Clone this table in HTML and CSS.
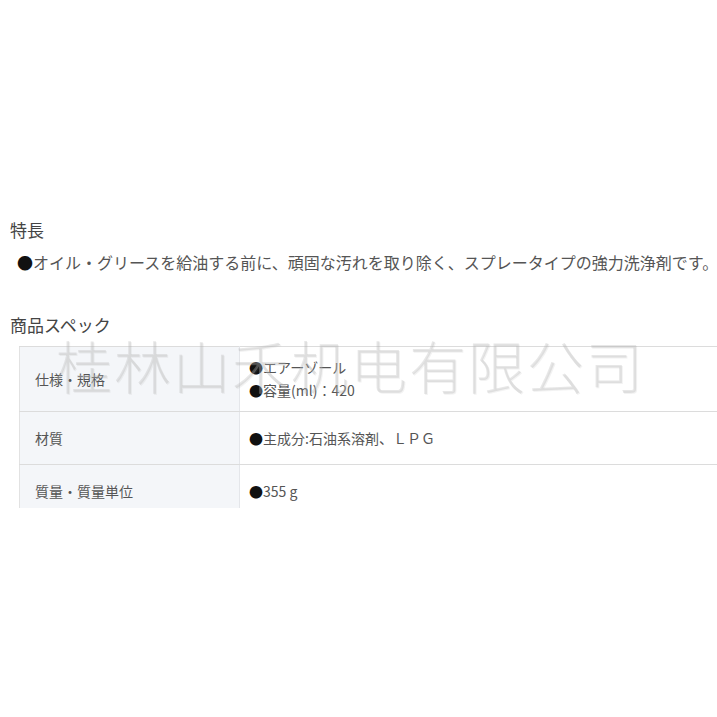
FILE: index.html
```html
<!DOCTYPE html>
<html lang="ja">
<head>
<meta charset="utf-8">
<title>商品詳細</title>
<link rel="stylesheet" href="styles.css">
</head>
<body>
<div class="page">
  <h2 class="heading">特長</h2>
  <p class="feature"><span class="dot">●</span>オイル・グリースを給油する前に、頑固な汚れを取り除く、スプレータイプの強力洗浄剤です。</p>
  <h2 class="heading heading-spec">商品スペック</h2>
  <div class="spec">
    <table class="spec-table">
      <tr class="row-1">
        <th>仕様・規格</th>
        <td><div><span class="dot">●</span>エアーゾール</div><div><span class="dot">●</span>容量(ml)：420</div></td>
      </tr>
      <tr class="row-2">
        <th>材質</th>
        <td><span class="dot">●</span>主成分:石油系溶剤、ＬＰＧ</td>
      </tr>
      <tr class="row-3">
        <th>質量・質量単位</th>
        <td><span class="dot">●</span>355 g</td>
      </tr>
    </table>
  </div>
  <div class="watermark">桂林山禾机电有限公司</div>
</div>
</body>
</html>
```

FILE: styles.css
```css
html, body {
  margin: 0;
  padding: 0;
  background: #fff;
  overflow: hidden;
}
body {
  font-family: "Noto Sans CJK JP", "Noto Sans", sans-serif;
  color: #555;
}
.page {
  position: relative;
  padding-top: 218px;
}
.heading {
  margin: 0;
  padding-left: 10px;
  font-size: 17px;
  line-height: 24px;
  font-weight: 400;
  color: #444;
}
.feature {
  margin: 8px 0 0;
  padding-left: 17px;
  font-size: 16px;
  line-height: 24px;
  white-space: nowrap;
  color: #555;
}
.dot {
  color: #111;
}
.heading-spec {
  margin-top: 39px;
}
.spec {
  margin: 9px 0 0 19px;
  height: 162px;
  overflow: hidden;
}
.spec-table {
  width: 760px;
  border-collapse: collapse;
  border-top: 1px solid #dcdcdc;
  border-left: 1px solid #e2e2e2;
}
.spec-table th,
.spec-table td {
  border-bottom: 1px solid #dcdcdc;
  vertical-align: middle;
  text-align: left;
  font-weight: 400;
  white-space: nowrap;
}
.spec-table th {
  width: 204px;
  padding: 0 0 0 15px;
  background: #f4f6f9;
  border-right: 1px solid #e4e6ea;
  font-size: 14px;
  color: #555;
}
.spec-table td {
  padding: 0 0 0 9px;
  font-size: 14px;
  line-height: 23px;
  color: #555;
}
.row-1 { height: 65px; }
.row-2 { height: 53px; }
.row-3 { height: 53px; }
.watermark {
  position: absolute;
  left: 55px;
  top: 329px;
  font-family: "Noto Sans CJK SC", "Noto Sans CJK JP", sans-serif;
  font-size: 57px;
  font-weight: 300;
  line-height: 70px;
  letter-spacing: 2px;
  color: rgba(185, 185, 185, 0.35);
  text-shadow: 1px 1px 0 rgba(150, 150, 150, 0.12);
  white-space: nowrap;
  pointer-events: none;
}
```
